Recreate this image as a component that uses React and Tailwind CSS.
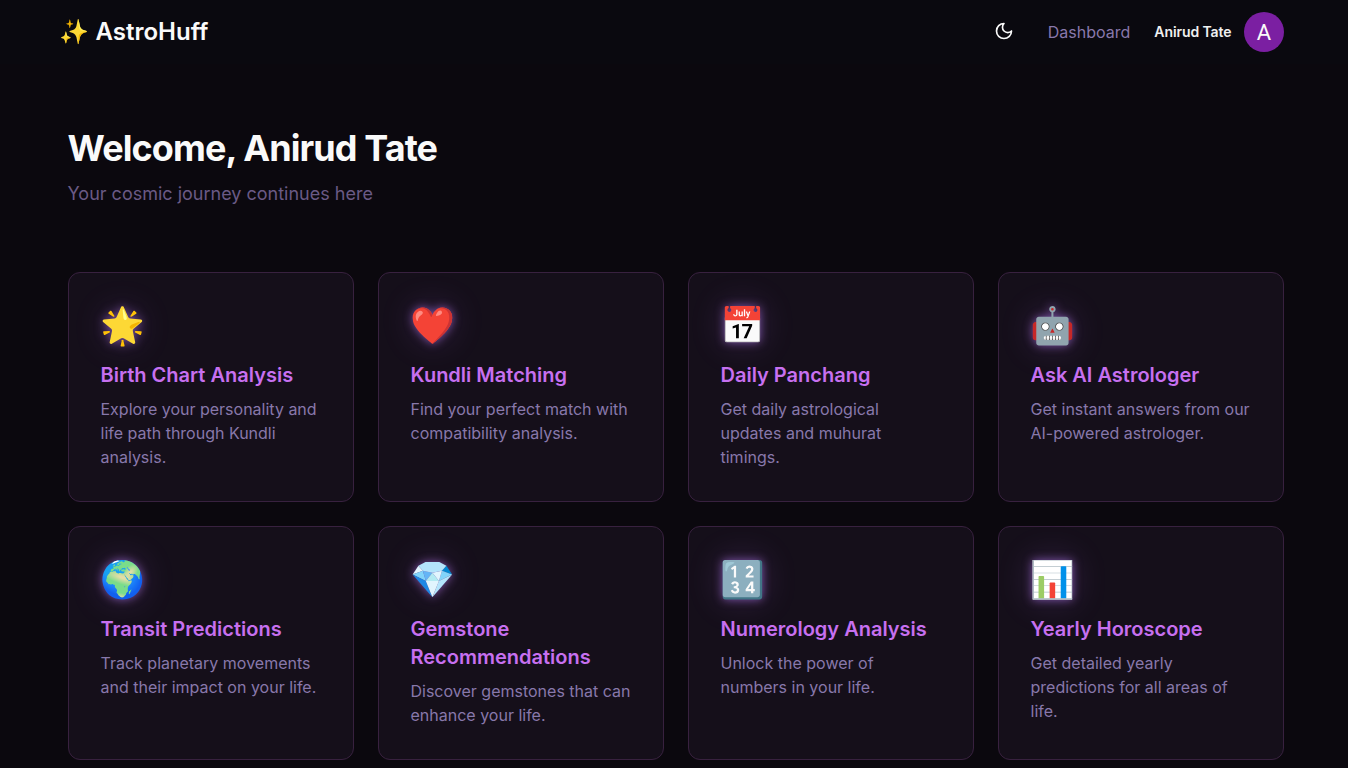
const cards = [
  ["🌟", "Birth Chart Analysis", "Explore your personality and life path through Kundli analysis."],
  ["❤️", "Kundli Matching", "Find your perfect match with compatibility analysis."],
  ["📅", "Daily Panchang", "Get daily astrological updates and muhurat timings."],
  ["🤖", "Ask AI Astrologer", "Get instant answers from our AI-powered astrologer."],
  ["🌍", "Transit Predictions", "Track planetary movements and their impact on your life."],
  ["💎", "Gemstone Recommendations", "Discover gemstones that can enhance your life."],
  ["🔢", "Numerology Analysis", "Unlock the power of numbers in your life."],
  ["📊", "Yearly Horoscope", "Get detailed yearly predictions for all areas of life."],
];

function Card({ icon, title, text }) {
  return (
    <div className="rounded-xl border border-[#38213f] bg-[#150f1a] p-8">
      <div className="mb-4 -ml-[0.6px] h-10 text-4xl leading-10 [text-shadow:0_0_10px_rgba(190,125,255,0.6),0_0_36px_rgba(190,125,255,0.2)]">{icon}</div>
      <h3 className="mb-2 text-xl font-semibold text-[#c770f0]">{title}</h3>
      <p className="text-base text-[#8878ab]">{text}</p>
    </div>
  );
}

export default function App() {
  return (
    <div className="h-screen overflow-hidden bg-[#0b080e] font-['Inter',sans-serif] text-[#fafafa]">
      <header className="flex h-16 items-center justify-between bg-[#0a090f] pr-16 pl-[58.9px]">
        <div className="flex text-2xl font-semibold">
          <span>✨</span>
          <span className="ml-[0.6px] whitespace-pre"> AstroHuff</span>
        </div>
        <div className="flex items-center">
          <svg className="mr-[34px] mb-0.5 size-5" viewBox="0 0 24 24" fill="none" stroke="currentColor" strokeWidth="2" strokeLinecap="round" strokeLinejoin="round">
            <path d="M12 3a6 6 0 0 0 9 9 9 9 0 1 1-9-9Z" />
          </svg>
          <span className="mr-6 text-base text-[#8878ab]">Dashboard</span>
          <span className="mr-[12.6px] text-sm font-semibold tracking-[-0.1px] text-[#f0f0f0]">Anirud Tate</span>
          <div className="flex size-10 items-center justify-center rounded-full bg-[#7b1fa2] font-['Roboto',sans-serif] text-[22px]">A</div>
        </div>
      </header>
      <main className="pt-16 pr-[64.5px] pl-[67.5px]">
        <h1 className="mb-3 text-4xl leading-10 font-bold tracking-tight">Welcome, Anirud Tate</h1>
        <p className="mb-16 text-lg text-[#6a5a85]">Your cosmic journey continues here</p>
        <div className="grid grid-cols-4 gap-6">
          {cards.map(([icon, title, text]) => (
            <Card key={title} icon={icon} title={title} text={text} />
          ))}
        </div>
      </main>
    </div>
  );
}
